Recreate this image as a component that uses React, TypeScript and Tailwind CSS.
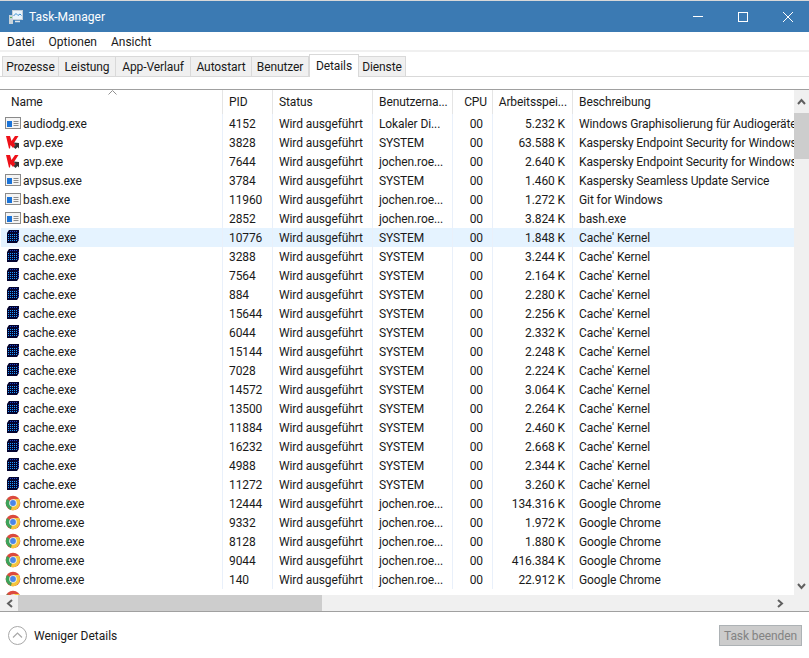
import React from 'react';

type Kind = 'exe' | 'kav' | 'cache' | 'chrome';

interface Proc {
  kind: Kind;
  name: string;
  pid: number;
  user: string;
  mem: string;
  desc: string;
}

const J = 'jochen.roe...';
const K = 'Kaspersky Endpoint Security for Windows';
const C = "Cache' Kernel";
const G = 'Google Chrome';

const cacheRows: [number, string][] = [
  [10776, '1.848 K'], [3288, '3.244 K'], [7564, '2.164 K'], [884, '2.280 K'],
  [15644, '2.256 K'], [6044, '2.332 K'], [15144, '2.248 K'], [7028, '2.224 K'],
  [14572, '3.064 K'], [13500, '2.264 K'], [11884, '2.460 K'], [16232, '2.668 K'],
  [4988, '2.344 K'], [11272, '3.260 K'],
];

const chromeRows: [number, string][] = [
  [12444, '134.316 K'], [9332, '1.972 K'], [8128, '1.880 K'], [9044, '416.384 K'], [140, '22.912 K'],
];

const procs: Proc[] = [
  { kind: 'exe', name: 'audiodg.exe', pid: 4152, user: 'Lokaler Di...', mem: '5.232 K', desc: 'Windows Graphisolierung für Audiogeräte' },
  { kind: 'kav', name: 'avp.exe', pid: 3828, user: 'SYSTEM', mem: '63.588 K', desc: K },
  { kind: 'kav', name: 'avp.exe', pid: 7644, user: J, mem: '2.640 K', desc: K },
  { kind: 'exe', name: 'avpsus.exe', pid: 3784, user: 'SYSTEM', mem: '1.460 K', desc: 'Kaspersky Seamless Update Service' },
  { kind: 'exe', name: 'bash.exe', pid: 11960, user: J, mem: '1.272 K', desc: 'Git for Windows' },
  { kind: 'exe', name: 'bash.exe', pid: 2852, user: J, mem: '3.824 K', desc: 'bash.exe' },
  ...cacheRows.map(([pid, mem]): Proc => ({ kind: 'cache', name: 'cache.exe', pid, user: 'SYSTEM', mem, desc: C })),
  ...chromeRows.map(([pid, mem]): Proc => ({ kind: 'chrome', name: 'chrome.exe', pid, user: J, mem, desc: G })),
];

function ProcIcon({ kind }: { kind: Kind }) {
  if (kind === 'exe') {
    return (
      <svg className="mt-px shrink-0" width="16" height="16" viewBox="0 0 16 16">
        <rect x="0.500" y="2.500" width="15" height="11" fill="#f4f4f4" stroke="#8a8a8a" />
        <rect x="2" y="6" width="5" height="6" fill="#1a73d8" />
        <path d="M8.500 6.500h5M8.500 8.500h5M8.500 10.500h5" stroke="#8a8a8a" />
      </svg>
    );
  }
  if (kind === 'kav') {
    return (
      <svg className="mt-px shrink-0" width="16" height="16" viewBox="0 0 16 16">
        <path d="M1 2h4l1.500 5L10 2h3.500L9 9l1.500 2L8 14 5.500 11 5 14.500H4z" fill="#ee1018" />
        <path d="M8.500 8.500l5.500 0.500v5.500L12.500 13 10.500 15 8.500 13l2-2z" fill="#333333" />
      </svg>
    );
  }
  if (kind === 'cache') {
    return (
      <svg className="mt-px shrink-0" width="16" height="16" viewBox="0 0 16 16">
        <path d="M4 1h10v10l-2 3H2V4z" fill="#03032e" />
        <path d="M3 5.500h9M3 7.500h9M3 9.500h9M3 11.500h9" stroke="#1e9bff" strokeDasharray="1 1" />
        <path d="M5 2.500h8M13.500 4v7" stroke="#2246c8" strokeDasharray="1 1" />
      </svg>
    );
  }
  return (
    <svg className="mt-px shrink-0" width="16" height="16" viewBox="0 0 16 16">
      <circle cx="8" cy="8" r="7.300" fill="#dc4a3d" />
      <path d="M8 8L2 4A7.300 7.300 0 0 0 6 15z" fill="#3da35a" />
      <path d="M8 8L6 15A7.300 7.300 0 0 0 15 8A7.300 7.300 0 0 0 14 4H8z" fill="#f4c63d" />
      <circle cx="8" cy="8" r="3.800" fill="#f0f0f0" />
      <circle cx="8" cy="8" r="2.900" fill="#4a86e8" />
    </svg>
  );
}

function Chevron({ d }: { d: string }) {
  return (
    <svg width="9" height="7" viewBox="0 0 9 7" fill="none" stroke="#606060" strokeWidth="2">
      <path d={d} />
    </svg>
  );
}

const tabs: [string, string][] = [
  ['Prozesse', 'w-[57px] border-l'],
  ['Leistung', 'w-[57px]'],
  ['App-Verlauf', 'w-[75px]'],
  ['Autostart', 'w-[61px]'],
  ['Benutzer', 'w-[57px]'],
];

const cell = 'shrink-0 overflow-hidden whitespace-nowrap border-r border-[#e9f0fa]';
const head = 'h-full shrink-0 border-r border-[#e5e5e5] leading-[25px]';

export default function App() {
  return (
    <div className="flex h-[658px] w-[809px] flex-col overflow-hidden bg-white text-[12px] tracking-[-0.1px] text-[#1a1a1a] [font-family:Roboto,sans-serif]">
      <div className="h-px shrink-0 bg-[#d8d8d8]" />

      <div className="flex h-[31px] shrink-0 items-center justify-between bg-[#3b7ab3] text-white">
        <div className="flex items-center gap-[5px] pl-[8px]">
          <svg width="16" height="16" viewBox="0 0 16 16">
            <rect x="1" y="6" width="4" height="9" fill="#c9d3da" />
            <rect x="2" y="8" width="2" height="1" fill="#5cb85c" />
            <rect x="4.500" y="1.500" width="10" height="9" fill="#eaf4fb" stroke="#c4cfd9" />
            <path d="M5.500 7l2.500-2.500 2 2 2-1.500 1.500 1.500" fill="none" stroke="#3b8fd0" />
            <path d="M7 12.500h5" stroke="#dfe6ec" strokeWidth="1.500" />
          </svg>
          <span className="tracking-normal">Task-Manager</span>
        </div>
        <div className="flex items-center gap-[35px] pr-[16px]">
          <div className="h-px w-[10px] bg-white" />
          <div className="h-[10px] w-[10px] border border-white" />
          <svg width="10" height="10" viewBox="0 0 10 10" stroke="#fff" fill="none">
            <path d="M0 0l10 10M10 0L0 10" />
          </svg>
        </div>
      </div>

      <div className="flex h-[18px] shrink-0 items-center gap-[14px] pl-[7px] pt-px tracking-normal">
        <span>Datei</span>
        <span>Optionen</span>
        <span>Ansicht</span>
      </div>

      <div className="h-[2px] shrink-0 bg-[#f0f0f0]" />

      <div className="flex h-[25px] shrink-0 items-end border-b border-[#d9d9d9] pl-[2px]">
        {tabs.map(([t, w]) => (
          <div key={t} className={`flex h-[20px] items-center justify-center border-r border-t border-[#d9d9d9] bg-[#f0f0f0] ${w}`}>
            {t}
          </div>
        ))}
        <div className="z-10 -mb-px flex h-[23px] w-[50px] items-center justify-center border-x border-t border-[#d9d9d9] bg-white">Details</div>
        <div className="flex h-[20px] w-[47px] items-center justify-center border-r border-t border-[#d9d9d9] bg-[#f0f0f0]">Dienste</div>
      </div>

      <div className="h-[12px] shrink-0" />

      <div className="flex min-h-0 flex-1 flex-col border-t border-[#a0a0a0]">
        <div className="flex min-h-0 flex-1">
          <div className="flex w-[794px] shrink-0 flex-col overflow-hidden pl-px">
            <div className="relative flex h-[24px] shrink-0 items-center">
              <svg className="absolute left-[107px] top-0" width="9" height="5" viewBox="0 0 9 5" fill="none" stroke="#909090">
                <path d="M0.500 4.500l4-4 4 4" />
              </svg>
              <div className={`${head} w-[222px] pl-[10px]`}>Name</div>
              <div className={`${head} w-[50px] pl-[6px]`}>PID</div>
              <div className={`${head} w-[100px] pl-[6px]`}>Status</div>
              <div className={`${head} w-[80px] pl-[6px]`}>Benutzerna...</div>
              <div className={`${head} w-[40px] pr-[5px] text-right`}>CPU</div>
              <div className={`${head} w-[80px] pr-[5px] text-right`}>Arbeitsspei...</div>
              <div className="h-full flex-1 pl-[6px] leading-[25px]">Beschreibung</div>
            </div>

            <div className="min-h-0 flex-1 overflow-hidden">
              {procs.map((p) => (
                <div key={p.pid} className={`flex h-[19px] items-start leading-[21px] ${p.pid === 10776 ? 'bg-[#e5f3ff]' : ''}`}>
                  <div className={`${cell} flex h-full w-[222px] items-start gap-[2px] pl-[4px]`}>
                    <ProcIcon kind={p.kind} />
                    <span>{p.name}</span>
                  </div>
                  <div className={`${cell} h-full w-[50px] pl-[6px]`}>{p.pid}</div>
                  <div className={`${cell} h-full w-[100px] pl-[6px]`}>Wird ausgeführt</div>
                  <div className={`${cell} h-full w-[80px] pl-[6px]`}>{p.user}</div>
                  <div className={`${cell} h-full w-[40px] pr-[9px] text-right`}>00</div>
                  <div className={`${cell} h-full w-[80px] pr-[7px] text-right`}>{p.mem}</div>
                  <div className="h-full min-w-0 flex-1 overflow-hidden whitespace-nowrap pl-[6px]">{p.desc}</div>
                </div>
              ))}
              <div className="flex h-[19px] items-start pl-[4px]">
                <ProcIcon kind="chrome" />
              </div>
            </div>
          </div>

          <div className="flex w-[15px] shrink-0 flex-col bg-[#f0f0f0]">
            <div className="flex h-[23px] shrink-0 items-center justify-center">
              <Chevron d="M1 6l3.500-4L8 6" />
            </div>
            <div className="h-[46px] shrink-0 bg-[#cdcdcd]" />
            <div className="flex-1" />
            <div className="flex h-[17px] shrink-0 items-center justify-center">
              <Chevron d="M1 1l3.500 4L8 1" />
            </div>
          </div>
        </div>

        <div className="flex h-[16px] shrink-0 items-center bg-[#f0f0f0]">
          <div className="flex w-[18px] shrink-0 items-center justify-center">
            <svg width="7" height="9" viewBox="0 0 7 9" fill="none" stroke="#606060" strokeWidth="2"><path d="M6 1L2 4.500 6 8" /></svg>
          </div>
          <div className="h-full w-[304px] shrink-0 bg-[#cdcdcd]" />
          <div className="flex-1" />
          <div className="flex w-[17px] shrink-0 items-center">
            <svg width="7" height="9" viewBox="0 0 7 9" fill="none" stroke="#606060" strokeWidth="2"><path d="M1 1l4 3.500L1 8" /></svg>
          </div>
          <div className="w-[15px] shrink-0" />
        </div>
      </div>

      <div className="flex h-[47px] shrink-0 items-center justify-between border-t border-[#a0a0a0] pl-[8px] pr-[7px] pt-px">
        <div className="flex items-center gap-[7px]">
          <svg width="19" height="19" viewBox="0 0 19 19" fill="none" stroke="#a8a8a8">
            <circle cx="9.500" cy="9.500" r="9" />
            <path d="M5 11.500l4.500-4.500 4.500 4.500" strokeWidth="1.200" />
          </svg>
          <span className="tracking-normal">Weniger Details</span>
        </div>
        <div className="flex h-[21px] w-[83px] items-center justify-center border border-[#adb2b5] bg-[#cccccc] text-[#838383]">Task beenden</div>
      </div>
    </div>
  );
}
